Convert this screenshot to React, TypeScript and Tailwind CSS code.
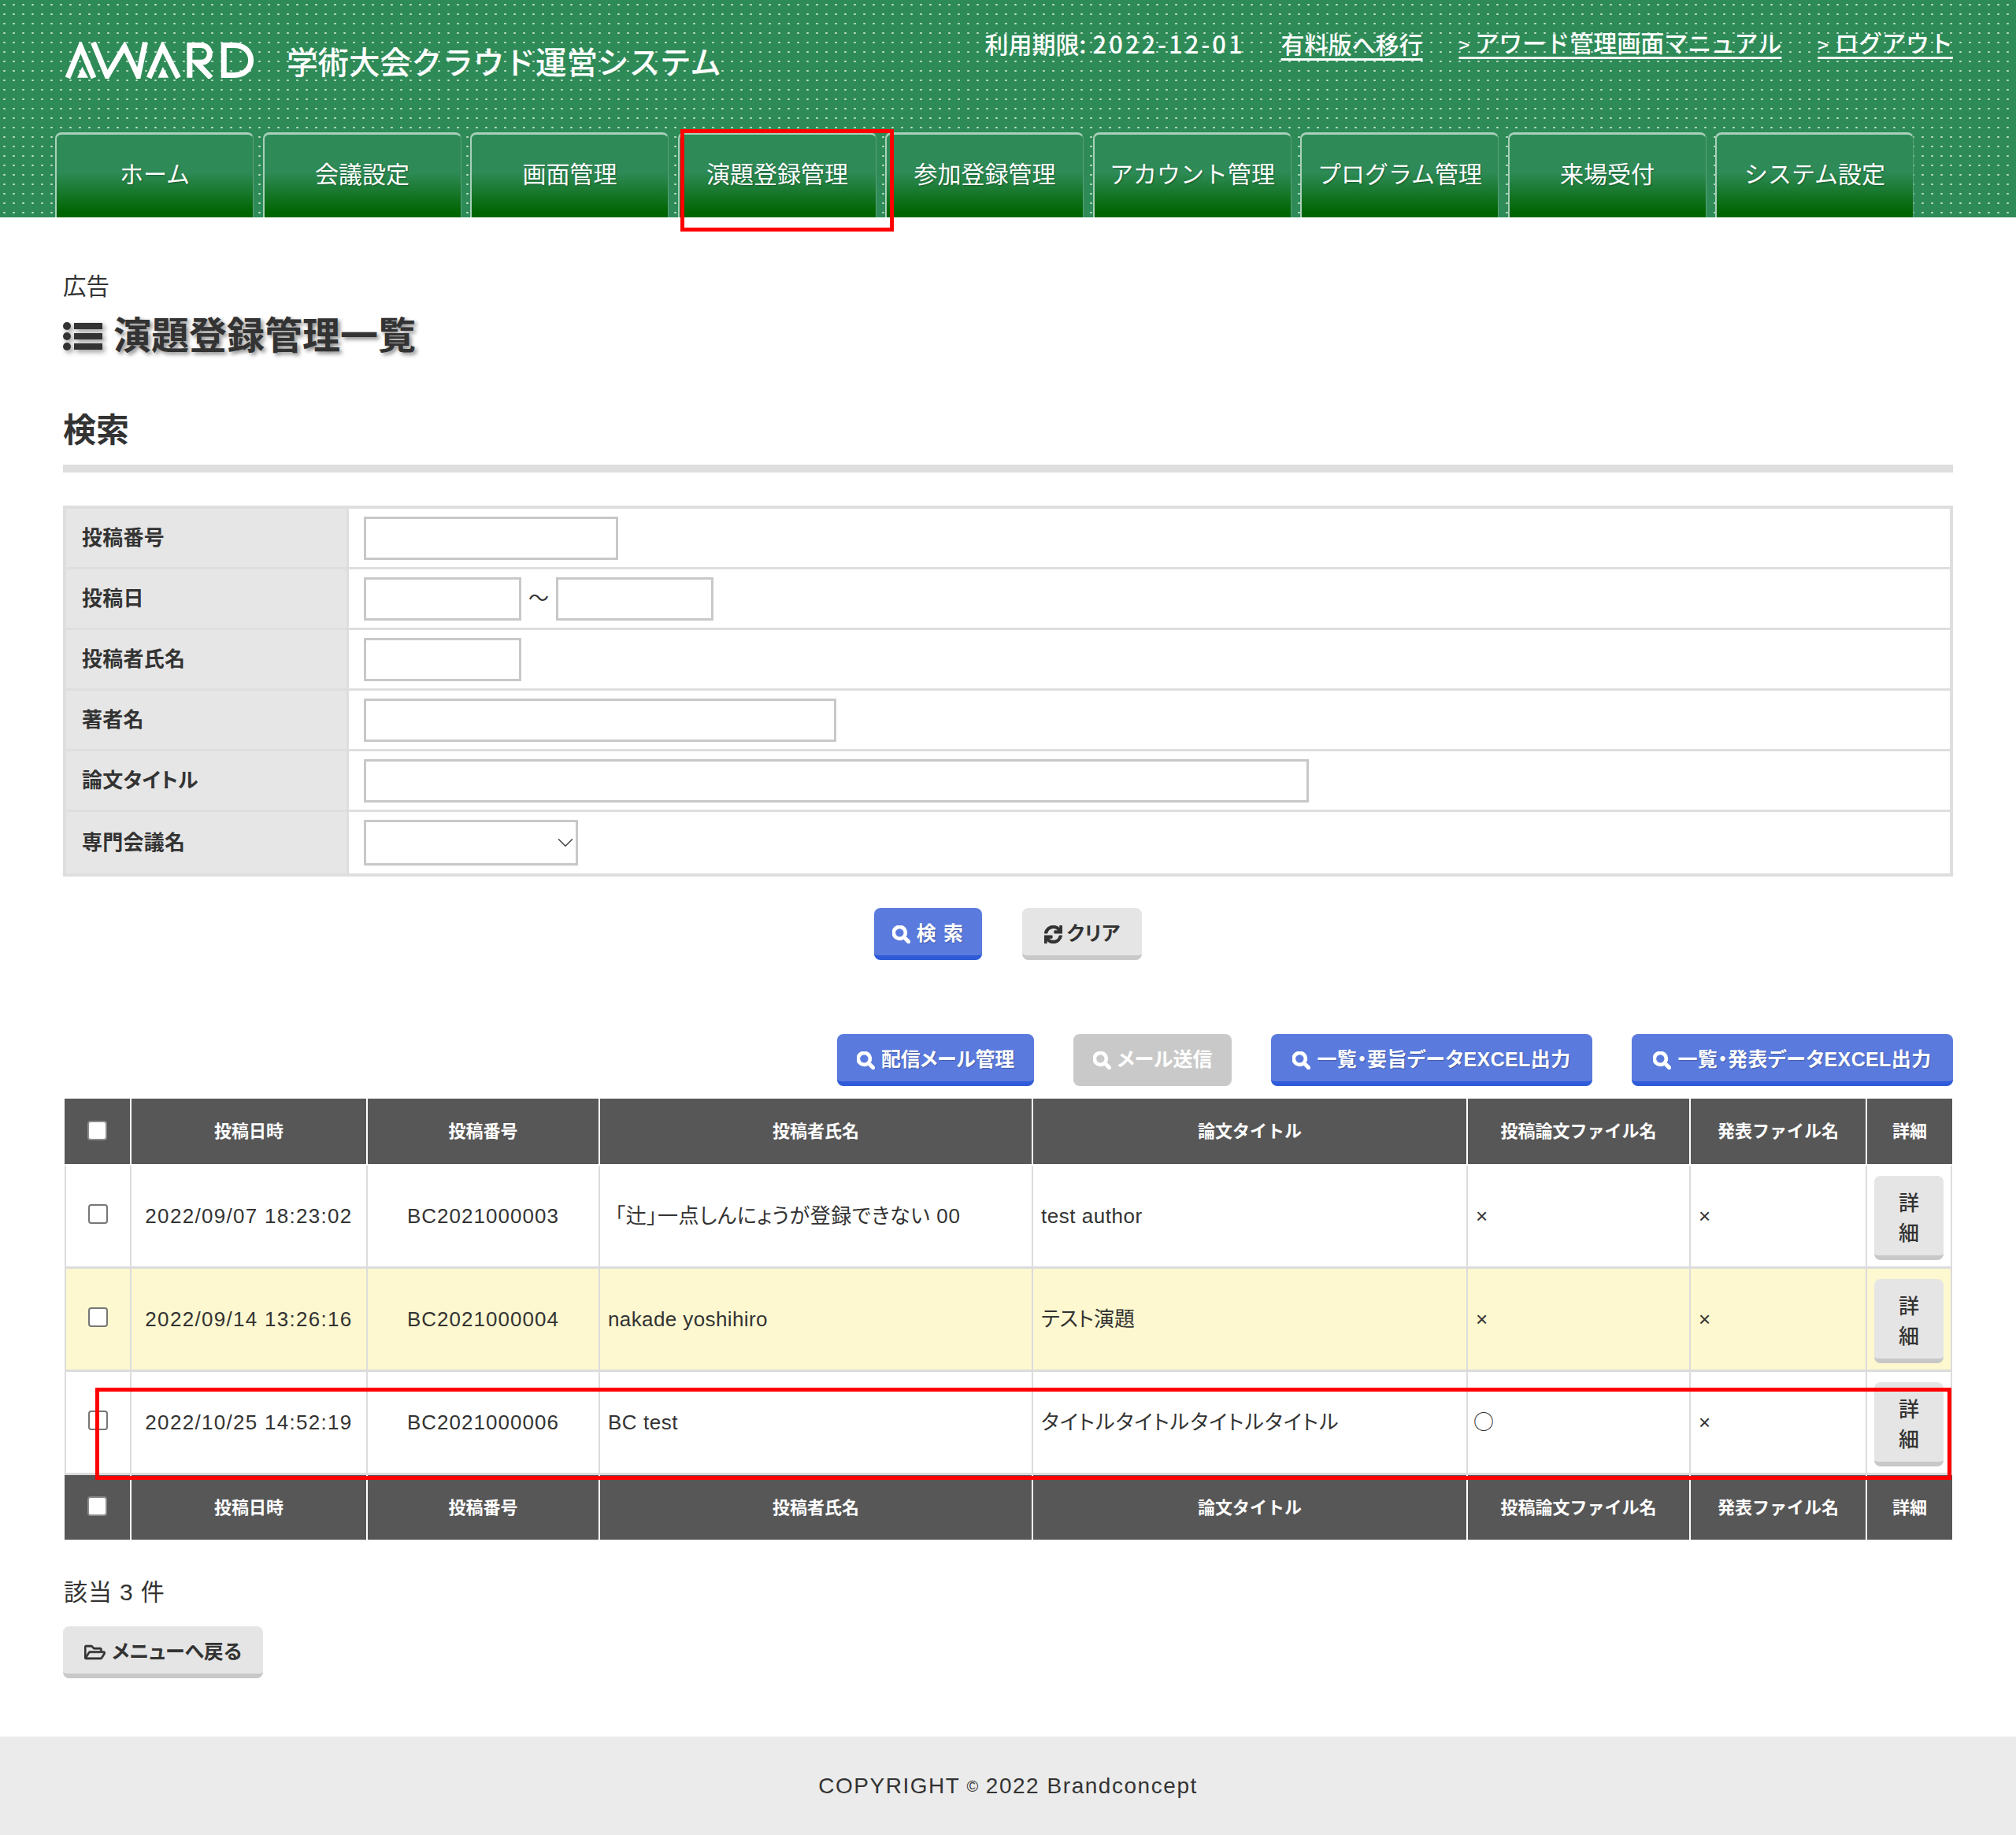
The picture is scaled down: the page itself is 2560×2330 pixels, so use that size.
import React from 'react';
import { ChevronDown } from 'lucide-react';
import { FaRegFolderOpen, FaSearch, FaSync } from 'react-icons/fa';

const tabs = ['ホーム', '会議設定', '画面管理', '演題登録管理', '参加登録管理', 'アカウント管理', 'プログラム管理', '来場受付', 'システム設定'];
const columns = ['投稿日時', '投稿番号', '投稿者氏名', '論文タイトル', '投稿論文ファイル名', '発表ファイル名', '詳細'];

const rows = [
  {
    date: '2022/09/07 18:23:02',
    no: 'BC2021000003',
    name: '「辻」一点しんにょうが登録できない 00',
    nameClass: 'pl-[19px] tracking-[0.025em]',
    title: 'test author',
    titleClass: 'tracking-[0.02em]',
    paper: '×',
    paperClass: 'pl-[10px]',
    bg: 'bg-white',
  },
  {
    date: '2022/09/14 13:26:16',
    no: 'BC2021000004',
    name: 'nakade yoshihiro',
    nameClass: 'pl-[10px] tracking-[0.015em]',
    title: 'テスト演題',
    titleClass: 'tracking-normal',
    paper: '×',
    paperClass: 'pl-[10px]',
    bg: 'bg-[#fdf8cf]',
  },
  {
    date: '2022/10/25 14:52:19',
    no: 'BC2021000006',
    name: 'BC test',
    nameClass: 'pl-[10px] tracking-[0.02em]',
    title: 'タイトルタイトルタイトルタイトル',
    titleClass: 'tracking-[0.045em]',
    paper: '○',
    paperClass: "pl-[7px] pb-[6px] [font-family:'Noto_Sans_CJK_JP',sans-serif] [font-feature-settings:'palt']",
    bg: 'bg-white',
  },
];

const Logo = () => (
  <svg viewBox="65 70 722 140" className="h-[47px] w-[241px]" aria-label="AWARD">
    <g fill="none" stroke="#fff" strokeWidth="21" strokeMiterlimit="10">
      <path d="M77 207 L126 88 L176 207" />
      <path d="M174 72 L227 200 L293 88 L345 200 L372 72" />
      <path d="M386 207 L438 88 L498 207" />
      <path d="M541 207 V83 H584 C628 83 628 148 584 148 H566 L622 207" />
      <path d="M671 83 V197 H710 C795 197 795 83 710 83 Z" />
    </g>
    <path d="M113 207 L132 165 L155 207 Z M420 207 L439 165 L461 207 Z" fill="#fff" />
  </svg>
);

const BlueBtn = ({ children, className = '' }: { children: React.ReactNode; className?: string }) => (
  <button className={`flex h-[66px] items-center justify-center gap-[8px] rounded-lg border-b-[6px] border-[#2f5bd8] bg-[#5a7ade] pt-[6px] text-[25px] font-bold text-white [text-shadow:1px_1px_1px_rgba(0,0,0,0.25)] ${className}`}>
    <FaSearch className="h-[23px] w-[23px]" stroke="currentColor" strokeWidth={24} />
    {children}
  </button>
);

const FormRow = ({ label, last, children }: { label: string; last?: boolean; children: React.ReactNode }) => (
  <div className={`flex ${last ? 'h-[78px]' : 'h-[77px] border-b-[3px] border-[#dedede]'}`}>
    <div className="flex w-[356px] items-center bg-[#e6e6e6] pl-[20px] text-[26px] font-bold tracking-[0.01em]">{label}</div>
    <div className="flex flex-1 items-center border-l-[3px] border-[#dedede] pl-[19px]">{children}</div>
  </div>
);

const HeadRow = ({ bottom }: { bottom?: boolean }) => (
  <tr>
    <th className={`bg-[#575757] ${bottom ? 'h-[82px]' : 'h-[85px] border-b-2 border-white'}`}>
      <input type="checkbox" className="mx-auto mb-[3px] block h-[25px] w-[25px] appearance-none rounded-[4px] border-2 border-[#8a8a8a] bg-white" />
    </th>
    {columns.map((c) => (
      <th key={c} className={`border-l-2 border-white bg-[#575757] text-[22px] font-bold text-white [font-feature-settings:normal] ${bottom ? '' : 'border-b-2'}`}>
        {c}
      </th>
    ))}
  </tr>
);

const cell = 'border-b-[3px] border-l-2 border-[#dcdcdc] text-[26px]';

export default function App() {
  return (
    <div className="relative min-h-[2330px] bg-white text-[#333] [font-family:'Liberation_Sans','Noto_Sans_CJK_JP',sans-serif] [font-feature-settings:'palt']">
      {/* Header */}
      <header className="flex h-[276px] flex-col justify-between bg-[#2e8b57] bg-[radial-gradient(circle_at_5.5px_6px,rgba(255,255,255,0.7)_1px,transparent_1.5px)] bg-[length:12px_12px]">
        <div className="flex items-start justify-between pl-[82px] pr-[80px] [font-feature-settings:normal]">
          <div className="mt-[53px] flex items-start gap-[41px]">
            <Logo />
            <span className="mt-[3px] text-[39.5px] leading-[48px] font-medium whitespace-nowrap text-white">学術大会クラウド運営システム</span>
          </div>
          <div className="mt-[32px] flex items-center gap-[46px] text-[30px] leading-[42px] font-medium whitespace-nowrap text-white [font-family:'Noto_Sans_CJK_JP',sans-serif]">
            <span>
              利用期限:<span className="ml-[8px] text-[31px] tracking-[0.095em]">2022-12-01</span>
            </span>
            <a className="underline decoration-[3px] underline-offset-[6px]">有料版へ移行</a>
            <a className="underline decoration-[3px] underline-offset-[6px]">
              <span className="text-[24px] tracking-[7px]">&gt;</span>アワード管理画面マニュアル
            </a>
            <a className="underline decoration-[3px] underline-offset-[6px]">
              <span className="text-[24px] tracking-[8px]">&gt;</span>ログアウト
            </a>
          </div>
        </div>
        <nav className="flex h-[108px] gap-[11.5px] pl-[70px] [font-feature-settings:normal]">
          {tabs.map((t) => (
            <div
              key={t}
              className="flex w-[252px] items-start justify-center rounded-t-lg border-t-[3px] border-r border-l-2 border-t-[#a9d0ba] border-r-[#5c9f7b] border-l-[#a9d0ba] bg-[linear-gradient(#2e8b57_45%,#006400_95%)] pt-[28px] text-[30px] leading-[46px] whitespace-nowrap text-white [text-shadow:1px_1px_2px_rgba(0,0,0,0.3)]"
            >
              {t}
            </div>
          ))}
        </nav>
      </header>

      <main className="px-[80px]">
        <p className="pt-[68px] text-[29.5px] leading-[40px]">広告</p>
        <h1 className="mt-[13px] flex h-[60px] items-center gap-[14px] text-[48px] font-bold [text-shadow:3px_3px_5px_rgba(0,0,0,0.45)]">
          <svg viewBox="0 0 50 36" className="h-[36px] w-[50px] [filter:drop-shadow(3px_3px_3px_rgba(0,0,0,0.4))]" fill="#333">
            <circle cx="5" cy="5" r="5" />
            <circle cx="5" cy="18" r="5" />
            <circle cx="5" cy="31" r="5" />
            <rect x="14" y="1" width="36" height="8" />
            <rect x="14" y="14" width="36" height="8" />
            <rect x="14" y="27" width="36" height="8" />
          </svg>
          演題登録管理一覧
        </h1>

        {/* Search */}
        <h2 className="mt-[60px] h-[83px] border-b-[10px] border-[#dedede] text-[42px] leading-[60px] font-bold">検索</h2>
        <div className="mt-[42px] border-4 border-[#dedede]">
          <FormRow label="投稿番号">
            <input className="h-[55px] w-[323px] border-[3px] border-[#c8c8c8]" />
          </FormRow>
          <FormRow label="投稿日">
            <input className="h-[55px] w-[200px] border-[3px] border-[#c8c8c8]" />
            <span className="w-[44px] text-center text-[26px]">〜</span>
            <input className="h-[55px] w-[200px] border-[3px] border-[#c8c8c8]" />
          </FormRow>
          <FormRow label="投稿者氏名">
            <input className="h-[55px] w-[200px] border-[3px] border-[#c8c8c8]" />
          </FormRow>
          <FormRow label="著者名">
            <input className="h-[55px] w-[600px] border-[3px] border-[#c8c8c8]" />
          </FormRow>
          <FormRow label="論文タイトル">
            <input className="h-[55px] w-[1200px] border-[3px] border-[#c8c8c8]" />
          </FormRow>
          <FormRow label="専門会議名" last>
            <div className="relative">
              <select className="block h-[58px] w-[272px] appearance-none border-[3px] border-[#c8c8c8] bg-white" />
              <ChevronDown className="absolute top-[12px] right-[-1px] h-[34px] w-[34px] text-[#444]" strokeWidth={1.1} />
            </div>
          </FormRow>
        </div>

        <div className="mt-[40px] flex justify-center gap-[51px]">
          <BlueBtn className="w-[137px] tracking-[0.05em]">検 索</BlueBtn>
          <button className="flex h-[66px] w-[152px] items-center justify-center gap-[6px] rounded-lg border-b-[6px] border-[#c8c8c8] bg-[#e5e5e5] pt-[6px] text-[25px] font-bold tracking-[0.01em]">
            <FaSync className="h-[23px] w-[23px]" stroke="currentColor" strokeWidth={24} />
            クリア
          </button>
        </div>

        {/* Results */}
        <div className="mt-[94px] flex justify-end gap-[50px]">
          <BlueBtn className="w-[250px] tracking-[-0.01em]">配信メール管理</BlueBtn>
          <button className="flex h-[66px] w-[201px] items-center justify-center gap-[8px] rounded-lg bg-[#c9c9c9] text-[25px] font-bold text-white">
            <FaSearch className="h-[23px] w-[23px]" stroke="currentColor" strokeWidth={24} />
            メール送信
          </button>
          <BlueBtn className="w-[408px] tracking-[0.015em]">一覧・要旨データEXCEL出力</BlueBtn>
          <BlueBtn className="w-[408px] tracking-[0.015em]">一覧・発表データEXCEL出力</BlueBtn>
        </div>

        <table className="mt-[16px] ml-[2px] w-[2397px] table-fixed border-separate border-spacing-0">
          <colgroup>
            <col className="w-[83px]" />
            <col className="w-[300px]" />
            <col className="w-[295px]" />
            <col className="w-[550px]" />
            <col className="w-[552px]" />
            <col className="w-[283px]" />
            <col className="w-[224px]" />
            <col className="w-[110px]" />
          </colgroup>
          <thead>
            <HeadRow />
          </thead>
          <tbody>
            {rows.map((r) => (
              <tr key={r.no} className={r.bg}>
                <td className="h-[131px] border-b-[3px] border-l-2 border-[#dcdcdc] pb-[6px]">
                  <input type="checkbox" className="mx-auto block h-[25px] w-[25px] appearance-none rounded-[4px] border-2 border-[#777] bg-white" />
                </td>
                <td className={`${cell} text-center tracking-[0.05em]`}>{r.date}</td>
                <td className={`${cell} text-center tracking-[0.04em]`}>{r.no}</td>
                <td className={`${cell} whitespace-nowrap ${r.nameClass}`}>{r.name}</td>
                <td className={`${cell} pl-[10px] ${r.titleClass}`}>{r.title}</td>
                <td className={`${cell} ${r.paperClass}`}>{r.paper}</td>
                <td className={`${cell} pl-[10px]`}>×</td>
                <td className="border-r-2 border-b-[3px] border-l-2 border-[#dcdcdc] pt-[5px] pl-[9px]">
                  <button className="block h-[107px] w-[88px] rounded-lg border-b-[6px] border-[#c8c8c8] bg-[#e5e5e5] pt-[6px] text-[26px] leading-[38px] font-medium">
                    詳<br />細
                  </button>
                </td>
              </tr>
            ))}
          </tbody>
          <tfoot>
            <HeadRow bottom />
          </tfoot>
        </table>

        <p className="mt-[46px] ml-[1px] text-[30px] leading-[42px] tracking-[0.03em]">該当 3 件</p>
        <button className="mt-[22px] flex h-[66px] w-[254px] items-center justify-center gap-[8px] rounded-lg border-b-[6px] border-[#c8c8c8] bg-[#e5e5e5] pt-[6px] text-[25px] font-bold">
          <FaRegFolderOpen className="h-[24px] w-[27px]" stroke="currentColor" strokeWidth={12} />
          メニューへ戻る
        </button>
      </main>

      <footer className="mt-[74px] flex h-[125px] items-center justify-center bg-[#ebebeb] text-[28px] tracking-[0.055em]">
        COPYRIGHT <span className="mx-[8px] text-[20px]">©</span> 2022 Brandconcept
      </footer>

      {/* Red review marks drawn over the page */}
      <div className="absolute top-[164px] left-[864px] h-[130px] w-[271px] border-[5px] border-[#f00]" />
      <div className="absolute top-[1762px] left-[121px] h-[117px] w-[2357px] border-[5px] border-[#f00]" />
    </div>
  );
}
